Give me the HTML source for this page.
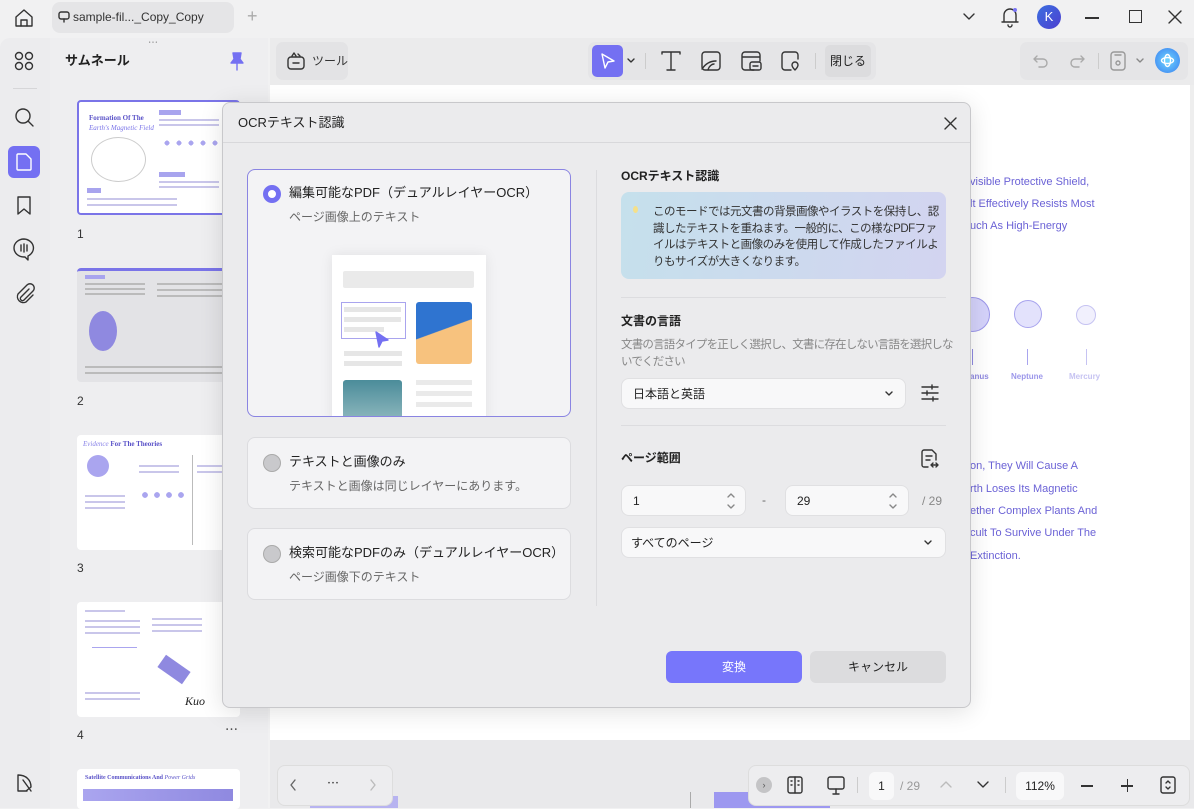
<!DOCTYPE html>
<html><head><meta charset="utf-8"><style>
*{box-sizing:border-box;margin:0;padding:0}
body{width:1194px;height:808px;overflow:hidden;position:relative;background:#f1f1f2;font-family:"Liberation Sans","Noto Sans CJK JP",sans-serif;color:#222;line-height:1.2}
.a{position:absolute}
.t{font-size:12px;color:#333}
svg{position:absolute;fill:none;stroke:#333;stroke-width:1.4;stroke-linecap:round;stroke-linejoin:round}
.thumb{position:absolute;left:77px;width:163px;background:#fff;border-radius:4px;overflow:hidden}
.ln{position:absolute;height:2px;background:#c9c6ea}
.card{position:absolute;left:247px;width:324px;background:#f3f3f5;border:1px solid #dcdcdf;border-radius:8px}
.radio{position:absolute;left:15px;width:18px;height:18px;border-radius:50%;background:#c9c9cc;border:1px solid #aaa}
.inp{position:absolute;background:#f8f8f9;border:1px solid #e0e0e2;border-radius:8px;font-size:12px;color:#222}
.doc{position:absolute;font-size:11px;color:#6b62d6}
</style></head><body>
<!-- title bar -->
<svg style="left:13px;top:8px" width="22" height="20" viewBox="0 0 22 20"><path d="M3 9L11 2l8 7v9H3z"/><path d="M8 18v-6h6v6"/></svg>
<div class="a" style="left:52px;top:2px;width:182px;height:31px;background:#e5e5e7;border-radius:8px"></div>
<svg style="left:58px;top:11px" width="12" height="12" viewBox="0 0 12 12"><rect x="1" y="1" width="10" height="7" rx="2"/><path d="M6 8v3"/></svg>
<div class="a t" style="left:73px;top:10px;font-size:12px">sample-fil..._Copy_Copy</div>
<div class="a" style="left:247px;top:6px;font-size:18px;color:#aaa">+</div>
<svg style="left:962px;top:12px" width="14" height="10" viewBox="0 0 14 10"><path d="M2 2l5 5 5-5"/></svg>
<svg style="left:1000px;top:5px" width="20" height="24" viewBox="0 0 20 24"><path d="M4 17V10a6 6 0 0112 0v7zM2 17h16M8 20a2 2 0 004 0"/><circle cx="15" cy="5" r="2" fill="#7873f5" stroke="none"/></svg>
<div class="a" style="left:1037px;top:5px;width:24px;height:24px;border-radius:50%;background:linear-gradient(135deg,#3b6fe0,#4d3fd0);color:#fff;font-size:13px;text-align:center;line-height:24px">K</div>
<div class="a" style="left:1085px;top:17px;width:14px;height:1.5px;background:#333"></div>
<div class="a" style="left:1129px;top:10px;width:13px;height:13px;border:1.5px solid #333"></div>
<svg style="left:1167px;top:9px" width="16" height="16" viewBox="0 0 16 16"><path d="M2 2l12 12M14 2L2 14"/></svg>

<!-- sidebar -->
<div class="a" style="left:0;top:38px;width:268px;height:770px;background:#ececee;border-top-left-radius:10px"></div>
<div class="a" style="left:50px;top:38px;width:218px;height:770px;background:#eeeef0"></div>
<div class="a" style="left:148px;top:38px;font-size:10px;color:#888;letter-spacing:1px">⋯</div>
<svg style="left:14px;top:51px" width="22" height="20" viewBox="0 0 22 20"><circle cx="5" cy="5" r="3.5"/><circle cx="15" cy="5" r="3.5"/><circle cx="5" cy="15" r="3.5"/><circle cx="15" cy="15" r="3.5"/></svg>
<div class="a" style="left:13px;top:88px;width:24px;height:1px;background:#d6d6d8"></div>
<svg style="left:14px;top:107px" width="22" height="22" viewBox="0 0 22 22"><circle cx="9" cy="9" r="7"/><path d="M14 14l5 5"/></svg>
<div class="a" style="left:8px;top:146px;width:32px;height:32px;background:#7470f2;border-radius:6px"></div>
<svg style="left:15px;top:152px;stroke:#fff" width="18" height="20" viewBox="0 0 18 20"><path d="M3 2h8l5 5v10a1 1 0 01-1 1H3a1 1 0 01-1-1V3a1 1 0 011-1z"/></svg>
<svg style="left:16px;top:195px" width="16" height="22" viewBox="0 0 16 22"><path d="M2 2h12v17l-6-5-6 5z"/></svg>
<svg style="left:12px;top:237px" width="24" height="24" viewBox="0 0 24 24"><path d="M12 2a10 9 0 100 18h1l3 3v-4a10 9 0 00-4-17z"/><path d="M9 8v6M12 7v8M15 8v6"/></svg>
<svg style="left:14px;top:283px" width="22" height="22" viewBox="0 0 22 22"><path d="M15 6l-8 8a2 2 0 003 3l9-9a4 4 0 00-6-6l-9 9a6 6 0 008 8l7-7"/></svg>
<svg style="left:15px;top:772px" width="20" height="22" viewBox="0 0 20 22"><path d="M3 3v16h9M3 3c8 0 13 5 13 12l-5 4M8 8l8 11"/></svg>
<div class="a" style="left:65px;top:53px;font-size:13px;font-weight:bold;color:#222">サムネール</div>
<svg style="left:229px;top:51px;stroke:#7470f2" width="16" height="20" viewBox="0 0 16 20"><path d="M4 2h8l-1 6 3 4H2l3-4z" fill="#7470f2"/><path d="M8 12v7"/></svg>

<div class="thumb" style="top:100px;height:115px;border:2px solid #7a74e8">
 <div class="a" style="left:10px;top:12px;font-size:7px;font-family:'Liberation Serif',serif;font-weight:bold;color:#5a52c8">Formation Of The</div>
 <div class="a" style="left:10px;top:22px;font-size:7px;font-family:'Liberation Serif',serif;font-style:italic;color:#7a74e8">Earth's Magnetic Field</div>
 <div class="a" style="left:12px;top:35px;width:55px;height:45px;border:1px solid #ccc;border-radius:50%"></div>
 <div class="a" style="left:80px;top:8px;width:22px;height:5px;background:#a8a4ee"></div>
 <div class="ln" style="left:80px;top:17px;width:60px"></div><div class="ln" style="left:80px;top:22px;width:60px"></div>
 <div class="a" style="left:82px;top:36px;width:70px;height:10px;background:radial-gradient(circle,#aaa5ef 30%,transparent 32%) 0 0/12px 10px"></div>
 <div class="a" style="left:80px;top:70px;width:26px;height:5px;background:#a8a4ee"></div>
 <div class="ln" style="left:80px;top:79px;width:60px"></div><div class="ln" style="left:80px;top:84px;width:60px"></div>
 <div class="a" style="left:8px;top:86px;width:14px;height:5px;background:#a8a4ee"></div>
 <div class="ln" style="left:8px;top:96px;width:90px"></div><div class="ln" style="left:8px;top:102px;width:90px"></div>
</div>
<div class="a t" style="left:77px;top:227px">1</div>
<div class="thumb" style="top:268px;height:114px;background:#e3e3e6;border-top:3px solid #7a74e8">
 <div class="a" style="left:8px;top:4px;width:20px;height:4px;background:#a8a4ee"></div>
 <div class="ln" style="left:8px;top:12px;width:60px;background:#bbb"></div><div class="ln" style="left:8px;top:17px;width:60px;background:#bbb"></div><div class="ln" style="left:8px;top:22px;width:60px;background:#bbb"></div>
 <div class="a" style="left:12px;top:40px;width:28px;height:40px;background:#8f89e0;border-radius:50%"></div>
 <div class="ln" style="left:80px;top:12px;width:70px;background:#bbb"></div><div class="ln" style="left:80px;top:18px;width:70px;background:#bbb"></div><div class="ln" style="left:80px;top:24px;width:70px;background:#bbb"></div>
 <div class="ln" style="left:8px;top:95px;width:140px;background:#bbb"></div><div class="ln" style="left:8px;top:101px;width:140px;background:#bbb"></div>
</div>
<div class="a t" style="left:77px;top:394px">2</div>
<div class="thumb" style="top:435px;height:115px">
 <div class="a" style="left:6px;top:5px;font-size:7px;font-family:'Liberation Serif',serif;color:#5a52c8;font-weight:bold"><i style="font-weight:normal;color:#8a84e8">Evidence</i> For The Theories</div>
 <div class="a" style="left:10px;top:20px;width:22px;height:22px;border-radius:50%;background:#aaa5ef"></div>
 <div class="ln" style="left:8px;top:60px;width:40px"></div><div class="ln" style="left:8px;top:66px;width:40px"></div><div class="ln" style="left:8px;top:72px;width:40px"></div>
 <div class="ln" style="left:62px;top:30px;width:40px"></div><div class="ln" style="left:62px;top:36px;width:40px"></div>
 <div class="a" style="left:62px;top:55px;width:50px;height:10px;background:radial-gradient(circle,#aaa5ef 35%,transparent 38%) 0 0/12px 10px"></div>
 <div class="a" style="left:115px;top:20px;width:1px;height:90px;background:#bbb"></div>
 <div class="ln" style="left:120px;top:30px;width:40px"></div><div class="ln" style="left:120px;top:36px;width:40px"></div>
</div>
<div class="a t" style="left:77px;top:561px">3</div>
<div class="thumb" style="top:602px;height:115px">
 <div class="ln" style="left:8px;top:8px;width:40px"></div>
 <div class="ln" style="left:8px;top:18px;width:55px"></div><div class="ln" style="left:8px;top:24px;width:55px"></div><div class="ln" style="left:8px;top:30px;width:55px"></div>
 <div class="a" style="left:15px;top:45px;width:45px;height:25px;border-top:1px solid #aaa5ef"></div>
 <div class="ln" style="left:75px;top:16px;width:50px"></div><div class="ln" style="left:75px;top:22px;width:50px"></div><div class="ln" style="left:75px;top:28px;width:50px"></div>
 <div class="a" style="left:82px;top:60px;width:30px;height:15px;background:#8f89e0;transform:rotate(35deg)"></div>
 <div class="ln" style="left:8px;top:90px;width:55px"></div><div class="ln" style="left:8px;top:96px;width:55px"></div>
 <div class="a" style="left:108px;top:92px;font-size:12px;font-style:italic;font-family:'Liberation Serif',serif">Kuo</div>
</div>
<div class="a t" style="left:77px;top:728px">4</div>
<div class="a" style="left:225px;top:722px;font-size:13px;color:#444">⋯</div>
<div class="thumb" style="top:769px;height:40px">
 <div class="a" style="left:8px;top:6px;font-size:6px;font-weight:bold;color:#5a52c8;font-family:'Liberation Serif',serif">Satellite Communications And <i style="font-weight:normal">Power Grids</i></div>
 <div class="a" style="left:6px;top:20px;width:150px;height:12px;background:linear-gradient(90deg,#aaa5ef,#8f89e0)"></div>
</div>

<!-- toolbar row -->
<div class="a" style="left:270px;top:38px;width:924px;height:47px;background:#ebebec"></div>
<div class="a" style="left:276px;top:42px;width:72px;height:38px;background:#e3e3e5;border-radius:7px"></div>
<svg style="left:286px;top:49px" width="20" height="22" viewBox="0 0 20 22"><rect x="2" y="8" width="16" height="12" rx="3"/><path d="M7 14h6M6 7l2-3 2 3M12 5l2 2"/></svg>
<div class="a t" style="left:312px;top:54px;font-size:12px">ツール</div>
<div class="a" style="left:588px;top:42px;width:288px;height:38px;background:#e5e5e7;border-radius:7px"></div>
<div class="a" style="left:592px;top:45px;width:31px;height:32px;background:#7470f2;border-radius:5px"></div>
<svg style="left:598px;top:51px;stroke:#fff" width="20" height="20" viewBox="0 0 20 20"><path d="M4 3l12 7-6 1-3 6z"/></svg>
<svg style="left:626px;top:57px" width="10" height="8" viewBox="0 0 10 8"><path d="M2 2l3 3 3-3"/></svg>
<div class="a" style="left:645px;top:53px;width:1px;height:16px;background:#ccc"></div>
<svg style="left:659px;top:50px" width="24" height="22" viewBox="0 0 24 22"><path d="M3 4V2h18v2M12 2v18M8 20h8"/></svg>
<svg style="left:700px;top:50px" width="22" height="22" viewBox="0 0 22 22"><rect x="2" y="2" width="18" height="18" rx="3"/><path d="M2 19c4-6 9-8 14-8M8 20c1-4 4-6 6-6"/></svg>
<svg style="left:740px;top:50px" width="24" height="22" viewBox="0 0 24 22"><path d="M14 20H5a3 3 0 01-3-3V5a3 3 0 013-3h12a3 3 0 013 3v6M2 7h18"/><rect x="10" y="12" width="11" height="8" rx="2"/><path d="M13 16h5"/></svg>
<svg style="left:780px;top:50px" width="22" height="22" viewBox="0 0 22 22"><path d="M11 20H5a3 3 0 01-3-3V5a3 3 0 013-3h10a3 3 0 013 3v4"/><path d="M15 20s-3-3-3-5a3 3 0 016 0c0 2-3 5-3 5z"/></svg>
<div class="a" style="left:815px;top:53px;width:1px;height:16px;background:#ccc"></div>
<div class="a" style="left:825px;top:45px;width:46px;height:32px;background:#dcdcde;border-radius:5px;font-size:12px;line-height:32px;text-align:center">閉じる</div>
<div class="a" style="left:1020px;top:42px;width:168px;height:38px;background:#e5e5e7;border-radius:7px"></div>
<svg style="left:1032px;top:52px;stroke:#aaa" width="18" height="18" viewBox="0 0 18 18"><path d="M5 4L2 7l3 3M2 7h9a4 4 0 010 8H7"/></svg>
<svg style="left:1068px;top:52px;stroke:#aaa" width="18" height="18" viewBox="0 0 18 18"><path d="M13 4l3 3-3 3M16 7H7a4 4 0 000 8h4"/></svg>
<div class="a" style="left:1098px;top:53px;width:1px;height:16px;background:#ccc"></div>
<svg style="left:1108px;top:50px;stroke:#999" width="20" height="22" viewBox="0 0 20 22"><rect x="3" y="2" width="14" height="18" rx="3"/><circle cx="10" cy="13" r="2"/><path d="M7 5h6"/></svg>
<svg style="left:1135px;top:57px;stroke:#888" width="10" height="8" viewBox="0 0 10 8"><path d="M2 2l3 3 3-3"/></svg>
<div class="a" style="left:1155px;top:48px;width:25px;height:25px;border-radius:50%;background:radial-gradient(circle,#6fd6ff,#3a7ef0)"></div>
<svg style="left:1160px;top:53px;stroke:#fff" width="15" height="15" viewBox="0 0 15 15"><ellipse cx="7.5" cy="7.5" rx="6" ry="3"/><ellipse cx="7.5" cy="7.5" rx="3" ry="6"/></svg>

<!-- document -->
<div class="a" style="left:270px;top:85px;width:924px;height:655px;background:#fff"></div>
<div class="a" style="left:1190px;top:85px;width:4px;height:655px;background:#eee"></div>
<div class="doc" style="left:970px;top:176px">visible Protective Shield,</div>
<div class="doc" style="left:970px;top:198px">lt Effectively Resists Most</div>
<div class="doc" style="left:970px;top:220px">uch As High-Energy</div>
<div class="a" style="left:955px;top:297px;width:35px;height:35px;border-radius:50%;background:#d4d2fa;border:1px solid #9c97ea"></div>
<div class="a" style="left:1014px;top:300px;width:28px;height:28px;border-radius:50%;background:#e3e2fc;border:1px solid #a8a4ee"></div>
<div class="a" style="left:1076px;top:305px;width:20px;height:20px;border-radius:50%;background:#f1f0fd;border:1px solid #c6c3f2"></div>
<div class="a" style="left:972px;top:349px;width:1px;height:16px;background:#8f89e0"></div>
<div class="a" style="left:1027px;top:349px;width:1px;height:16px;background:#a8a4ee"></div>
<div class="a" style="left:1086px;top:349px;width:1px;height:16px;background:#c6c3f2"></div>
<div class="a" style="left:970px;top:372px;font-size:8px;font-weight:bold;color:#8f89e0">anus</div>
<div class="a" style="left:1011px;top:372px;font-size:8px;font-weight:bold;color:#9c97ea">Neptune</div>
<div class="a" style="left:1069px;top:372px;font-size:8px;font-weight:bold;color:#c6c3f2">Mercury</div>
<div class="doc" style="left:970px;top:460px">on, They Will Cause A</div>
<div class="doc" style="left:970px;top:483px">rth Loses Its Magnetic</div>
<div class="doc" style="left:970px;top:505px">ether Complex Plants And</div>
<div class="doc" style="left:970px;top:527px">cult To Survive Under The</div>
<div class="doc" style="left:970px;top:550px">Extinction.</div>

<!-- bottom bar -->
<div class="a" style="left:270px;top:740px;width:924px;height:68px;background:#e9e9eb"></div>
<div class="a" style="left:310px;top:796px;width:88px;height:12px;background:#b7b3f0"></div>
<div class="a" style="left:714px;top:792px;width:116px;height:16px;background:#9d98f0"></div>
<div class="a" style="left:690px;top:792px;width:1px;height:16px;background:#aaa"></div>
<div class="a" style="left:277px;top:765px;width:116px;height:41px;background:#ededef;border:1px solid #ddd;border-radius:8px"></div>
<svg style="left:288px;top:778px;stroke:#666" width="10" height="14" viewBox="0 0 10 14"><path d="M7 2L3 7l4 5"/></svg>
<div class="a" style="left:327px;top:776px;font-size:12px;color:#333">⋯</div>
<svg style="left:368px;top:778px;stroke:#bbb" width="10" height="14" viewBox="0 0 10 14"><path d="M3 2l4 5-4 5"/></svg>
<div class="a" style="left:748px;top:765px;width:442px;height:41px;background:#ededef;border:1px solid #ddd;border-radius:8px"></div>
<div class="a" style="left:756px;top:777px;width:16px;height:16px;border-radius:50%;background:#c4c4c6;font-size:9px;text-align:center;line-height:16px;color:#555">›</div>
<svg style="left:785px;top:775px" width="20" height="20" viewBox="0 0 20 20"><rect x="3" y="2" width="14" height="16" rx="2"/><path d="M10 2v16M6 6h1M6 10h1M13 6h1M13 10h1"/></svg>
<svg style="left:826px;top:775px" width="20" height="22" viewBox="0 0 20 22"><rect x="2" y="2" width="16" height="12" rx="2"/><path d="M10 14v4M7 19h6"/></svg>
<div class="a" style="left:857px;top:777px;width:1px;height:16px;background:#ccc"></div>
<div class="a" style="left:869px;top:772px;width:25px;height:28px;background:#f8f8f9;border-radius:6px;font-size:12px;text-align:center;line-height:28px">1</div>
<div class="a" style="left:900px;top:779px;font-size:12px;color:#999">/ 29</div>
<svg style="left:939px;top:779px;stroke:#bbb" width="14" height="10" viewBox="0 0 14 10"><path d="M2 8l5-5 5 5"/></svg>
<svg style="left:976px;top:780px" width="14" height="10" viewBox="0 0 14 10"><path d="M2 2l5 5 5-5"/></svg>
<div class="a" style="left:1005px;top:777px;width:1px;height:16px;background:#ccc"></div>
<div class="a" style="left:1016px;top:772px;width:48px;height:28px;background:#f8f8f9;border-radius:6px;font-size:12px;text-align:center;line-height:28px">112%</div>
<div class="a" style="left:1081px;top:785px;width:12px;height:1.5px;background:#333"></div>
<div class="a" style="left:1121px;top:785px;width:12px;height:1.5px;background:#333"></div><div class="a" style="left:1126.5px;top:779px;width:1.5px;height:13px;background:#333"></div>
<svg style="left:1158px;top:775px" width="20" height="20" viewBox="0 0 20 20"><rect x="3" y="2" width="14" height="16" rx="2"/><path d="M8 8l2-2 2 2M8 12l2 2 2-2"/></svg>

<!-- dialog -->
<div class="a" style="left:222px;top:102px;width:749px;height:606px;background:#ebebed;border:1px solid #c8c8cb;border-radius:8px;box-shadow:0 4px 24px rgba(0,0,0,.12)"></div>
<div class="a" style="left:238px;top:115px;font-size:13px;color:#222">OCRテキスト認識</div>
<svg style="left:943px;top:116px" width="15" height="15" viewBox="0 0 15 15"><path d="M2 2l11 11M13 2L2 13"/></svg>
<div class="a" style="left:223px;top:142px;width:747px;height:1px;background:#d8d8db"></div>

<div class="card" style="top:169px;height:248px;border-color:#8a84e2;overflow:hidden">
 <div class="radio" style="top:15px;background:#fff;border:5px solid #7470f2"></div>
 <div class="a" style="left:41px;top:15px;font-size:13px;color:#222">編集可能なPDF（デュアルレイヤーOCR）</div>
 <div class="a" style="left:41px;top:40px;font-size:12px;color:#666">ページ画像上のテキスト</div>
 <div class="a" style="left:84px;top:85px;width:154px;height:170px;background:#fff;box-shadow:0 0 12px rgba(0,0,0,.08)">
  <div class="a" style="left:11px;top:16px;width:131px;height:17px;background:#eaeaea;border-radius:2px"></div>
  <div class="a" style="left:9px;top:47px;width:65px;height:37px;border:1px solid #a9a4ee"></div>
  <div class="a" style="left:12px;top:52px;width:57px;height:5px;background:#e6e6e6"></div>
  <div class="a" style="left:12px;top:62px;width:57px;height:5px;background:#e6e6e6"></div>
  <div class="a" style="left:12px;top:72px;width:40px;height:5px;background:#e6e6e6"></div>
  <svg style="left:42px;top:75px" width="16" height="18" viewBox="0 0 16 18"><path d="M2 2l12 8-6 1-3 6z" fill="#7470f2" stroke="#7470f2"/></svg>
  <div class="a" style="left:12px;top:96px;width:58px;height:5px;background:#e6e6e6"></div>
  <div class="a" style="left:12px;top:106px;width:58px;height:5px;background:#e6e6e6"></div>
  <div class="a" style="left:84px;top:47px;width:56px;height:62px;border-radius:3px;background:linear-gradient(160deg,#2f74d0 45%,#f7c27e 46%)"></div>
  <div class="a" style="left:11px;top:125px;width:59px;height:40px;border-radius:3px;background:linear-gradient(#4b8c9a,#8db7bd)"></div>
  <div class="a" style="left:84px;top:125px;width:56px;height:5px;background:#eaeaea"></div>
  <div class="a" style="left:84px;top:136px;width:56px;height:5px;background:#eaeaea"></div>
  <div class="a" style="left:84px;top:147px;width:56px;height:5px;background:#eaeaea"></div>
 </div>
</div>
<div class="card" style="top:437px;height:72px">
 <div class="radio" style="top:16px"></div>
 <div class="a" style="left:41px;top:16px;font-size:13px;color:#222">テキストと画像のみ</div>
 <div class="a" style="left:41px;top:41px;font-size:12px;color:#666">テキストと画像は同じレイヤーにあります。</div>
</div>
<div class="card" style="top:528px;height:72px">
 <div class="radio" style="top:16px"></div>
 <div class="a" style="left:41px;top:16px;font-size:13px;color:#222">検索可能なPDFのみ（デュアルレイヤーOCR）</div>
 <div class="a" style="left:41px;top:41px;font-size:12px;color:#666">ページ画像下のテキスト</div>
</div>
<div class="a" style="left:596px;top:170px;width:1px;height:436px;background:#dcdcdf"></div>

<div class="a" style="left:621px;top:169px;font-size:12px;font-weight:bold;color:#222">OCRテキスト認識</div>
<div class="a" style="left:621px;top:192px;width:325px;height:87px;border-radius:8px;background:linear-gradient(100deg,#c5e0ec,#d3d4f0)"></div>
<div class="a" style="left:633px;top:206px;width:5px;height:7px;border-radius:50%;background:#f5e08a"></div>
<div class="a" style="left:653px;top:204px;width:290px;font-size:11.5px;letter-spacing:-0.5px;line-height:16.5px;color:#333">このモードでは元文書の背景画像やイラストを保持し、認識したテキストを重ねます。一般的に、この様なPDFファイルはテキストと画像のみを使用して作成したファイルよりもサイズが大きくなります。</div>
<div class="a" style="left:621px;top:297px;width:325px;height:1px;background:#dcdcdf"></div>
<div class="a" style="left:621px;top:314px;font-size:12px;font-weight:bold;color:#222">文書の言語</div>
<div class="a" style="left:621px;top:337px;width:332px;font-size:11.5px;letter-spacing:-0.8px;line-height:17px;color:#888">文書の言語タイプを正しく選択し、文書に存在しない言語を選択しないでください</div>
<div class="inp" style="left:621px;top:378px;width:285px;height:31px"><span class="a" style="left:11px;top:8px">日本語と英語</span><svg style="left:262px;top:11px" width="10" height="8" viewBox="0 0 10 8"><path d="M2 2l3 3 3-3"/></svg></div>
<svg style="left:920px;top:383px" width="20" height="20" viewBox="0 0 20 20"><path d="M2 4h16M2 10h16M2 16h16M12 2v4M7 8v4M13 14v4"/></svg>
<div class="a" style="left:621px;top:425px;width:325px;height:1px;background:#dcdcdf"></div>
<div class="a" style="left:621px;top:451px;font-size:12px;font-weight:bold;color:#222">ページ範囲</div>
<svg style="left:920px;top:448px" width="20" height="22" viewBox="0 0 20 22"><path d="M8 19H4a2 2 0 01-2-2V4a2 2 0 012-2h8l4 4v6M6 8h6M6 12h4M11 17h7M11 17l2-2M11 17l2 2M18 17l-2-2M18 17l-2 2"/></svg>
<div class="inp" style="left:621px;top:485px;width:125px;height:31px"><span class="a" style="left:11px;top:8px">1</span><svg style="left:104px;top:5px;stroke:#888" width="10" height="20" viewBox="0 0 10 20"><path d="M2 6l3-3 3 3M2 14l3 3 3-3"/></svg></div>
<div class="a" style="left:762px;top:493px;font-size:12px;color:#666">-</div>
<div class="inp" style="left:785px;top:485px;width:124px;height:31px"><span class="a" style="left:11px;top:8px">29</span><svg style="left:102px;top:5px;stroke:#888" width="10" height="20" viewBox="0 0 10 20"><path d="M2 6l3-3 3 3M2 14l3 3 3-3"/></svg></div>
<div class="a" style="left:922px;top:494px;font-size:12px;color:#888">/ 29</div>
<div class="inp" style="left:621px;top:527px;width:325px;height:31px"><span class="a" style="left:9px;top:8px">すべてのページ</span><svg style="left:301px;top:11px" width="10" height="8" viewBox="0 0 10 8"><path d="M2 2l3 3 3-3"/></svg></div>

<div class="a" style="left:666px;top:651px;width:136px;height:32px;background:#7776fb;border-radius:6px;color:#fff;font-size:12px;text-align:center;line-height:32px">変換</div>
<div class="a" style="left:810px;top:651px;width:136px;height:32px;background:#dcdcde;border-radius:6px;color:#222;font-size:12px;text-align:center;line-height:32px">キャンセル</div>
</body></html>
